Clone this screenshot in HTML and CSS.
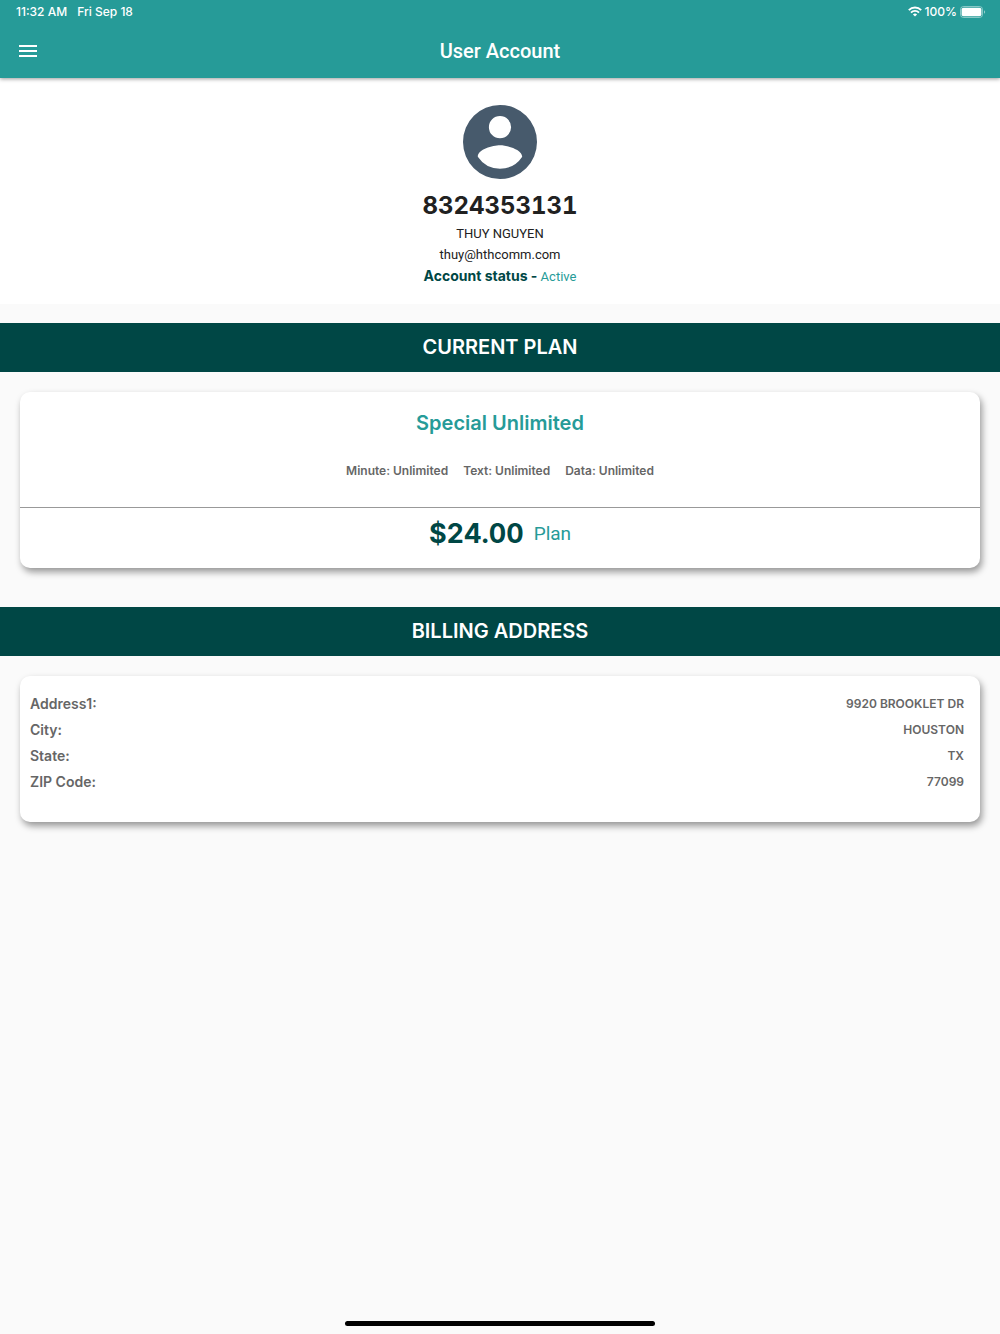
FILE: index.html
```html
<!DOCTYPE html>
<html lang="en">
<head>
  <meta charset="UTF-8">
  <meta name="viewport" content="width=device-width, initial-scale=1.0">
  <title>User Account</title>
  <link rel="stylesheet" href="styles.css">
</head>
<body>
  <header class="header">
    <div class="status-bar">
      <span>11:32 AM</span>
      <span>Fri Sep 18</span>
      <div class="status-right">
        <svg class="wifi" viewBox="0 0 14 11" width="14" height="11" fill="none" stroke="#fff" stroke-width="1.9">
          <path d="M.8 4.1a8.8 8.8 0 0 1 12.4 0"/>
          <path d="M3 6.6a5.6 5.6 0 0 1 8 0"/>
          <path d="M7 10.6 4.9 8.5a3 3 0 0 1 4.2 0z" fill="#fff" stroke="none"/>
        </svg>
        <span>100%</span>
        <svg class="battery" viewBox="0 0 26 12" width="26" height="12">
          <rect x=".5" y=".5" width="22" height="11" rx="3" fill="none" stroke="#fff" stroke-opacity=".45"/>
          <rect x="1.6" y="1.8" width="19.8" height="8.4" rx="1.8" fill="#fff"/>
          <path d="M24 4.2v3.6a2 2 0 0 0 0-3.6z" fill="#fff" fill-opacity=".5"/>
        </svg>
      </div>
    </div>
    <div class="nav-bar">
      <button class="menu-btn" type="button" aria-label="Menu">
        <svg viewBox="0 0 18 12" width="18" height="12" fill="#fff">
          <path d="M0 0h18v2H0zM0 5h18v2H0zM0 10h18v2H0z"/>
        </svg>
      </button>
      <h1>User Account</h1>
    </div>
  </header>

  <main>
    <section class="profile">
      <svg class="avatar" viewBox="2 2 20 20" width="74" height="74" fill="#475a6c">
        <path fill-rule="evenodd" d="M12 2a10 10 0 1 0 0 20 10 10 0 0 0 0-20zm0 3a3 3 0 1 1 0 6 3 3 0 0 1 0-6zm0 14.2a7.2 7.2 0 0 1-6-3.22c.03-1.99 4-3.08 6-3.08 1.99 0 5.97 1.09 6 3.08a7.2 7.2 0 0 1-6 3.22z"/>
      </svg>
      <h2>8324353131</h2>
      <p>THUY NGUYEN</p>
      <p>thuy@hthcomm.com</p>
      <p class="account-status"><strong>Account status -</strong> <span>Active</span></p>
    </section>

    <h2 class="section-title">CURRENT PLAN</h2>
    <section class="card plan">
      <h3>Special Unlimited</h3>
      <ul class="plan-limits">
        <li>Minute: Unlimited</li>
        <li>Text: Unlimited</li>
        <li>Data: Unlimited</li>
      </ul>
      <p class="plan-price"><strong>$24.00</strong> <span>Plan</span></p>
    </section>

    <h2 class="section-title">BILLING ADDRESS</h2>
    <section class="card">
      <dl class="address">
        <div><dt>Address1:</dt><dd>9920 BROOKLET DR</dd></div>
        <div><dt>City:</dt><dd>HOUSTON</dd></div>
        <div><dt>State:</dt><dd>TX</dd></div>
        <div><dt>ZIP Code:</dt><dd>77099</dd></div>
      </dl>
    </section>
  </main>

  <div class="home-indicator"></div>
</body>
</html>
```
FILE: styles.css
```css
* {
  box-sizing: border-box;
  margin: 0;
  padding: 0;
}
body {
  display: flex;
  flex-direction: column;
  min-height: 100vh;
  font-family: Inter, "Liberation Sans", sans-serif;
  color: #212121;
  background-color: #fafafa;
}
.header {
  position: relative;
  color: #fff;
  background-color: #269b98;
  box-shadow: 0 1px 4px rgba(0, 0, 0, 0.4);
}
.status-bar {
  display: flex;
  align-items: center;
  gap: 10px;
  height: 23px;
  padding: 0 14px 0 16px;
  font-size: 12px;
  font-weight: 500;
}
.status-right {
  display: flex;
  align-items: center;
  gap: 3px;
  margin-left: auto;
}
.nav-bar {
  display: grid;
  grid-template-columns: 1fr auto 1fr;
  align-items: center;
  height: 55px;
  padding: 0 19px;
}
.menu-btn {
  justify-self: start;
  display: flex;
  border: 0;
  background: none;
  cursor: pointer;
}
.nav-bar h1 {
  font-family: Roboto, sans-serif;
  font-size: 20px;
  font-weight: 500;
}
.profile {
  padding: 27px 20px 17px;
  text-align: center;
  background-color: #fff;
}
.avatar {
  display: block;
  margin: 0 auto 10px;
}
.profile h2 {
  font-size: 24px;
  font-variant-numeric: tabular-nums;
  line-height: 34px;
}
.profile p {
  font-family: Roboto, sans-serif;
  font-size: 13px;
  line-height: 21px;
}
.account-status strong {
  font-family: Inter, sans-serif;
  font-size: 14px;
  color: #004745;
}
.account-status span,
.plan-price span {
  color: #269b98;
}
.section-title {
  margin: 19px 0 20px;
  font-size: 20px;
  font-weight: 600;
  line-height: 49px;
  text-align: center;
  color: #fff;
  background-color: #004745;
}
.card {
  margin: 0 20px 39px;
  border-radius: 10px;
  background-color: #fff;
  box-shadow: 2px 4px 7px rgba(0, 0, 0, 0.4);
}
.plan {
  text-align: center;
}
.plan h3 {
  padding-top: 16px;
  font-size: 20px;
  font-weight: 600;
  line-height: 30px;
  color: #269b98;
}
.plan-limits {
  display: flex;
  justify-content: center;
  gap: 15px;
  padding: 23px 0 27px;
  list-style: none;
  font-size: 12px;
  font-weight: 600;
  line-height: 19px;
  color: #666;
  border-bottom: 1px solid #999;
}
.plan-price {
  display: flex;
  justify-content: center;
  align-items: center;
  gap: 10px;
  padding: 8px 0 16px;
  line-height: 36px;
}
.plan-price strong {
  font-size: 27px;
  font-variant-numeric: tabular-nums;
  color: #004745;
}
.plan-price span {
  font-family: Roboto, sans-serif;
  font-size: 19px;
}
.address {
  padding: 15px 16px 27px 10px;
  font-weight: 600;
  color: #666;
}
.address div {
  display: flex;
  justify-content: space-between;
  line-height: 26px;
}
.address dt {
  font-size: 14px;
}
.address dd {
  font-size: 12px;
}
.home-indicator {
  width: 31%;
  height: 5px;
  margin: auto auto 8px;
  border-radius: 3px;
  background-color: #000;
}
```
